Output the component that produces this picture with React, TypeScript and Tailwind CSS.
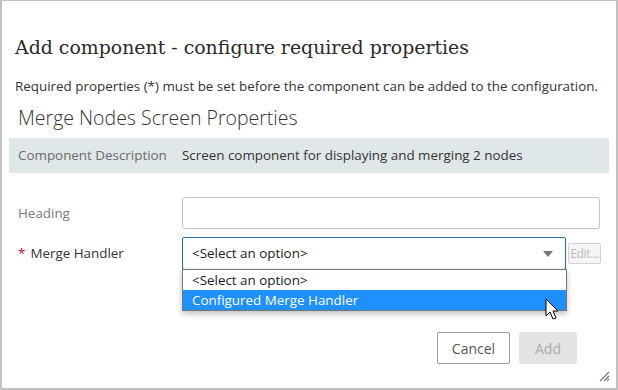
import React from "react";

const Cursor = () => (
  <svg width="16" height="24" viewBox="0 0 16 24" className="absolute left-[543px] top-[297px]">
    <path
      d="M1 1 L1 18 L5 14 L8 21 L11 20 L8 13 L13 13 Z"
      fill="white"
      stroke="black"
      strokeWidth="1"
      strokeLinejoin="miter"
    />
  </svg>
);

const Grip = () => (
  <svg width="12" height="12" viewBox="0 0 12 12" className="absolute right-[6px] bottom-[6px]">
    <path d="M11 2 L2 11 M11 6 L6 11 M11 9 L9 11" stroke="#777" strokeWidth="1.2" />
  </svg>
);

export default function App() {
  return (
    <div className="relative w-[618px] h-[390px] bg-white border-l-2 border-r-2 border-b-2 border-t border-[#c2c2c2] font-['Open_Sans',sans-serif] text-[13.4px] text-[#333] overflow-hidden">
      <div className="pt-[31px] pl-[13px]">
        <h1 className="font-['DejaVu_Serif',serif] text-[18.9px] leading-[30px] text-[#2a2a2a]">
          Add component - configure required properties
        </h1>
        <p className="mt-[15px] leading-[18px] text-[#333]">
          Required properties (*) must be set before the component can be added to the configuration.
        </p>
        <h2 className="mt-[10px] pl-[3px] text-[19.5px] font-light leading-[26px] text-[#333]">
          Merge Nodes Screen Properties
        </h2>
      </div>

      <div className="mx-[7px] mt-[7px] h-[35px] bg-[#dfe7e9] flex items-center">
        <span className="w-[173px] pl-[9px] text-[#6b6b6b]">Component Description</span>
        <span className="text-[#333]">Screen component for displaying and merging 2 nodes</span>
      </div>

      <div className="mt-[24px] flex items-center pl-[16px]">
        <label className="w-[164px] text-[#7a7a7a]">Heading</label>
        <div className="w-[418px] h-[32px] border border-[#c4c4c4] rounded-[3px]" />
      </div>

      <div className="mt-[8px] flex items-center pl-[16px]">
        <label className="w-[164px] text-[#333]">
          <span className="text-[#d0021b] mr-[5px]">*</span>Merge Handler
        </label>
        <div className="w-[384px] h-[33px] border border-[#2b6ea5] rounded-[2px] flex items-center justify-between pl-[9px] pr-[12px]">
          <span className="text-[#222]">&lt;Select an option&gt;</span>
          <svg width="10" height="6" viewBox="0 0 10 6">
            <path d="M0 0 L10 0 L5 6 Z" fill="#777" />
          </svg>
        </div>
        <button className="ml-[2px] w-[33px] h-[21px] border border-[#d2d2d2] rounded-[2px] bg-[#f5f5f5] text-[12px] tracking-[-0.3px] text-[#bdbdbd] leading-none">
          Edit...
        </button>
      </div>

      <div className="absolute left-[180px] top-[268px] w-[385px] border border-[#767676] bg-white shadow-[0_3px_6px_rgba(0,0,0,0.25)]">
        <div className="h-[20px] flex items-center pl-[9px] text-[#222]">&lt;Select an option&gt;</div>
        <div className="h-[20px] flex items-center pl-[9px] bg-[#1e90ff] text-white">Configured Merge Handler</div>
      </div>

      <div className="mt-[62px] flex justify-end gap-[9px] pr-[39px]">
        <button className="w-[73px] h-[32px] border border-[#9a9a9a] rounded-[2px] bg-white text-[#555] text-[14px]">
          Cancel
        </button>
        <button className="w-[58px] h-[32px] rounded-[2px] bg-[#e3e3e3] text-[#ababab] text-[14px]">
          Add
        </button>
      </div>

      <Cursor />
      <Grip />
    </div>
  );
}
